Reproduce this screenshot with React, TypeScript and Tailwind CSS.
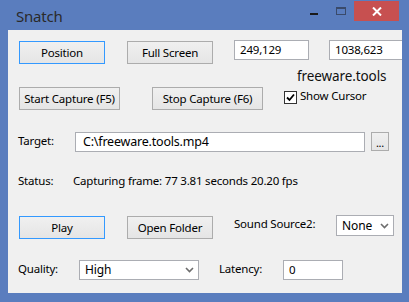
import React from "react";

const font = "font-['Noto_Sans','Open_Sans',sans-serif]";

type BtnProps = {
	label: string;
	w: string;
	focused?: boolean;
	className?: string;
};

const WinButton = ({ label, w, focused, className }: BtnProps) => (
	<button
		className={
			"h-[23px] shrink-0 flex items-center justify-center text-[11.5px] tracking-[-0.2px] text-black bg-gradient-to-b from-[#f0f0f0] to-[#e5e5e5] border " +
			(focused ? "border-[#3399ff] " : "border-[#acacac] ") +
			w +
			" " +
			(className ?? "")
		}
	>
		{label}
	</button>
);

const TextBox = ({ value, w, className }: { value: string; w: string; className?: string }) => (
	<div
		className={
			"h-[20px] shrink-0 bg-white border border-[#abadb3] flex items-center pl-[5px] text-[11.5px] tracking-[-0.2px] text-black whitespace-nowrap overflow-hidden " +
			w +
			" " +
			(className ?? "")
		}
	>
		{value}
	</div>
);

const Chevron = () => (
	<svg width="9" height="6" viewBox="0 0 9 6" className="shrink-0">
		<path d="M1 1 L4.5 4.5 L8 1" fill="none" stroke="#6d6d6d" strokeWidth="1.6" />
	</svg>
);

const Select = ({ value, w, h, className }: { value: string; w: string; h: string; className?: string }) => (
	<div
		className={
			"shrink-0 bg-white border border-[#abadb3] flex items-center justify-between pl-[5px] pr-[4px] text-[12px] tracking-[-0.1px] text-black " +
			w +
			" " +
			h +
			" " +
			(className ?? "")
		}
	>
		<span>{value}</span>
		<Chevron />
	</div>
);

export default function App() {
	return (
		<div className={"w-[409px] h-[302px] bg-[#5a7dbe] flex flex-col overflow-hidden " + font}>
			{/* title bar */}
			<div className="h-[30px] flex items-start shrink-0">
				<span className="ml-[16px] mt-[5px] text-[15px] tracking-[-0.2px] text-[#2a2a2a]">Snatch</span>
				<div className="ml-auto flex items-start">
					<div className="w-[8px] h-[2px] bg-[#1a1a1a] mt-[13px] mr-[18px]" />
					<div className="w-[10px] h-[8px] border border-[#3a4a6a] border-t-2 mt-[7px] mr-[8px]" />
					<div className="w-[45px] h-[20px] mt-[1px] mr-[10px] bg-[#c75050] flex items-center justify-center">
						<svg width="10" height="9" viewBox="0 0 10 9">
							<path d="M1 0.5 L9 8.5 M9 0.5 L1 8.5" stroke="#ffffff" strokeWidth="2" />
						</svg>
					</div>
				</div>
			</div>

			{/* client area */}
			<div className="ml-[8px] w-[394px] h-[263px] bg-[#f0f0f0] flex flex-col text-[11.5px] tracking-[-0.2px] text-black overflow-hidden">
				<div className="flex items-start mt-[10px] h-[24px]">
					<WinButton label="Position" w="w-[86px]" focused className="ml-[11px] mt-[1px]" />
					<WinButton label="Full Screen" w="w-[86px]" className="ml-[22px] mt-[1px]" />
					<TextBox value="249,129" w="w-[75px]" className="ml-[21px]" />
					<TextBox value="1038,623" w="w-[90px]" className="ml-[20px]" />
				</div>
				<div className="h-[23px] flex">
					<span className="ml-[289px] text-[13.5px] tracking-[-0.1px] leading-[20px] mt-[2px] text-[#111]">freeware.tools</span>
				</div>
				<div className="flex items-start h-[23px]">
					<WinButton label="Start Capture (F5)" w="w-[101px]" className="ml-[11px]" />
					<WinButton label="Stop Capture (F6)" w="w-[111px]" className="ml-[32px]" />
					<div className="ml-[21px] mt-[4px] w-[13px] h-[13px] border border-[#333] bg-white flex items-center justify-center">
						<svg width="9" height="9" viewBox="0 0 9 9">
							<path d="M1 4.5 L3.5 7 L8 1.5" fill="none" stroke="#000" strokeWidth="1.8" />
						</svg>
					</div>
					<span className="ml-[3px] mt-[1px] leading-[16px]">Show Cursor</span>
				</div>
				<div className="flex items-start mt-[22px] h-[20px]">
					<span className="ml-[10px] w-[57px] mt-[1px] leading-[16px]">Target:</span>
					<TextBox value="C:\freeware.tools.mp4" w="w-[290px]" className="text-[12.5px] pl-[7px]" />
					<div className="ml-[6px] w-[18px] h-[19px] bg-gradient-to-b from-[#f0f0f0] to-[#e5e5e5] border border-[#acacac] flex items-end justify-center text-[11px] leading-[14px]">
						...
					</div>
				</div>
				<div className="flex items-start mt-[21px] h-[16px]">
					<span className="ml-[10px] w-[55px] leading-[16px]">Status:</span>
					<span className="leading-[16px]">Capturing frame: 77 3.81 seconds 20.20 fps</span>
				</div>
				<div className="flex items-start mt-[26px] h-[23px]">
					<WinButton label="Play" w="w-[86px]" focused className="ml-[11px] mt-[1px]" />
					<WinButton label="Open Folder" w="w-[86px]" className="ml-[22px] mt-[1px]" />
					<span className="ml-[21px] mt-[1px] leading-[16px]">Sound Source2:</span>
					<Select value="None" w="w-[58px]" h="h-[21px]" className="ml-auto mr-[8px]" />
				</div>
				<div className="flex items-start mt-[22px] h-[20px]">
					<span className="ml-[10px] w-[61px] mt-[1px] leading-[16px]">Quality:</span>
					<Select value="High" w="w-[120px]" h="h-[20px]" />
					<span className="ml-[20px] w-[64px] mt-[1px] leading-[16px]">Latency:</span>
					<TextBox value="0" w="w-[60px]" />
				</div>
			</div>
		</div>
	);
}
